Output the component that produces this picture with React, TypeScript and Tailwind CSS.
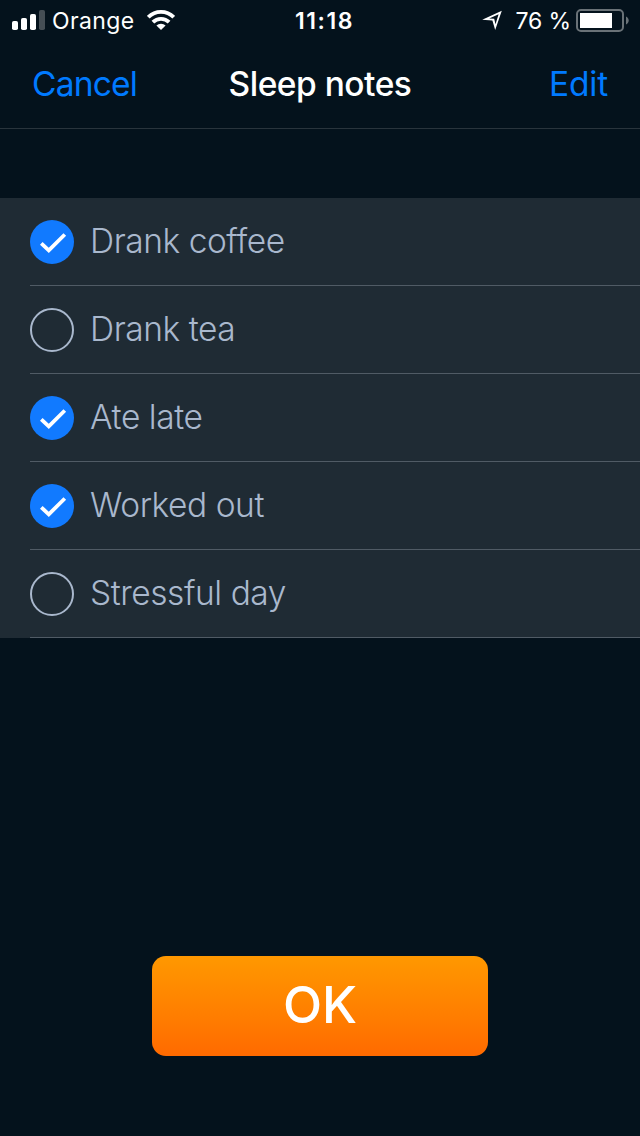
import { useState } from "react";

const initialNotes = [
  { id: 1, label: "Drank coffee", checked: true },
  { id: 2, label: "Drank tea", checked: false },
  { id: 3, label: "Ate late", checked: true },
  { id: 4, label: "Worked out", checked: true },
  { id: 5, label: "Stressful day", checked: false },
];

function SignalIcon() {
  return (
    <svg width="33" height="20" viewBox="0 0 33 20" fill="white">
      <rect x="0" y="11" width="6" height="9" rx="1.8" />
      <rect x="9" y="8" width="6" height="12" rx="1.8" />
      <rect x="18" y="4" width="6" height="16" rx="1.8" />
      <rect x="27" y="0" width="6" height="20" rx="1.8" fill="#454e55" />
    </svg>
  );
}

function WifiIcon() {
  return (
    <svg width="28" height="20" viewBox="0 0 28 20" fill="none" stroke="white" strokeWidth="3.8">
      <path d="M1.3 7.2a18 18 0 0 1 25.4 0" />
      <path d="M5.9 12.2a11.5 11.5 0 0 1 16.2 0" />
      <path d="M14 20l-4.6-4.4a6.5 6.5 0 0 1 9.2 0z" fill="white" stroke="none" />
    </svg>
  );
}

function LocationIcon() {
  return (
    <svg width="20" height="20" viewBox="0 0 20 20" fill="none">
      <path
        d="M0.2 9.8L19.8 0.8L13.2 20L10.4 10.6ZM7.2 8.6L12.2 8.8L13.5 14.2L16.6 4.2Z"
        fill="white"
        fillRule="evenodd"
      />
    </svg>
  );
}

function BatteryIcon() {
  return (
    <svg className="mt-px" width="53" height="23" viewBox="0 0 53 23">
      <rect x="1" y="1" width="46" height="21" rx="4" fill="none" stroke="#6a7277" strokeWidth="2" />
      <rect x="4" y="4" width="32" height="15" fill="white" />
      <path d="M50 7.5c3.6 1.5 3.6 6.5 0 8z" fill="#6a7277" />
    </svg>
  );
}

function CheckCircle({ checked }: { checked: boolean }) {
  return (
    <svg width="44" height="44" viewBox="0 0 44 44" fill="none">
      {checked ? (
        <>
          <circle cx="22" cy="22" r="22" fill="#117aff" />
          <path d="M11.3 23.3L18.8 30.3L34.8 14.5" stroke="white" strokeWidth="3.8" />
        </>
      ) : (
        <circle cx="22" cy="22" r="21" stroke="#a9b8cd" strokeWidth="2" />
      )}
    </svg>
  );
}

export default function App() {
  const [notes, setNotes] = useState(initialNotes);

  const toggle = (id: number) => {
    setNotes(notes.map((n) => (n.id === id ? { ...n, checked: !n.checked } : n)));
  };

  return (
    <div className="flex h-[1136px] w-[640px] flex-col overflow-hidden bg-[#04121c] font-['Inter','Liberation_Sans',sans-serif] text-white">
      {/* status bar */}
      <div className="grid h-10 grid-cols-[1fr_auto_1fr] items-center pr-[11px] pl-3 text-[23px] leading-[38px]">
        <div className="flex items-center">
          <SignalIcon />
          <span className="ml-[7px] w-[95px] pt-0.5 tracking-[0.4px]">Orange</span>
          <WifiIcon />
        </div>
        <span className="mr-[-8px] pt-0.5 font-semibold tracking-[1.6px]">11:18</span>
        <div className="flex items-center justify-end">
          <LocationIcon />
          <span className="mr-[5px] ml-[13px] pt-0.5 tracking-[-0.1px]">76 %</span>
          <BatteryIcon />
        </div>
      </div>

      {/* nav bar */}
      <header className="grid h-[89px] grid-cols-[1fr_auto_1fr] items-center border-b border-[#29343c] px-8 pt-px text-[33.5px]">
        <button className="text-left tracking-[-0.8px] text-[#007aff]">Cancel</button>
        <h1 className="font-medium tracking-[-0.5px]">Sleep notes</h1>
        <button className="text-right tracking-[-0.2px] text-[#007aff]">Edit</button>
      </header>

      <ul className="mt-[69px] bg-[#1f2b34] pl-[30px]">
        {notes.map((note) => (
          <li key={note.id} className="h-[88px] border-b border-[#505b65]">
            <button
              onClick={() => toggle(note.id)}
              className="flex h-full w-full items-center pt-px text-left"
            >
              <CheckCircle checked={note.checked} />
              <span className="-mt-px ml-4 text-[33.5px] font-light tracking-[-0.45px] text-[#a9b8cd]">
                {note.label}
              </span>
            </button>
          </li>
        ))}
      </ul>

      <footer className="mt-auto flex justify-center pb-20">
        <button className="h-[100px] w-[336px] rounded-[14px] bg-linear-to-b from-[#ff9800] to-[#ff6a00] pb-px text-[51px] font-medium">
          OK
        </button>
      </footer>
    </div>
  );
}
